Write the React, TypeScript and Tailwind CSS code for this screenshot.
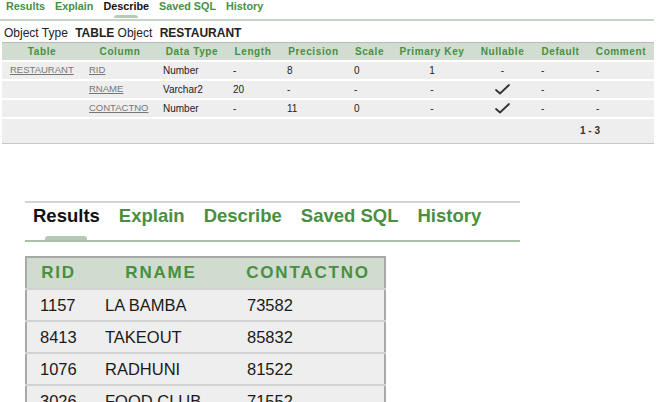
import React from "react"

const green = "text-[#4a8f3f]"

const topTabs = ["Results", "Explain", "Describe", "Saved SQL", "History"]

type DescRow = {
  table: string
  column: string
  type: string
  length: string
  precision: string
  scale: string
  pk: string
  nullable: boolean
}

const descRows: DescRow[] = [
  { table: "RESTAURANT", column: "RID", type: "Number", length: "-", precision: "8", scale: "0", pk: "1", nullable: false },
  { table: "", column: "RNAME", type: "Varchar2", length: "20", precision: "-", scale: "-", pk: "-", nullable: true },
  { table: "", column: "CONTACTNO", type: "Number", length: "-", precision: "11", scale: "0", pk: "-", nullable: true },
]

const results = [
  ["1157", "LA BAMBA", "73582"],
  ["8413", "TAKEOUT", "85832"],
  ["1076", "RADHUNI", "81522"],
  ["3026", "FOOD CLUB", "71552"],
]

const Check = () => (
  <svg width="15" height="11" viewBox="0 0 15 11" className="inline-block">
    <path d="M1 6 L5 9.5 L14 1" fill="none" stroke="#333" strokeWidth={1.8} strokeLinecap="round" strokeLinejoin="round" />
  </svg>
)

const cols = [
  { label: "Table", w: "w-[80px]" },
  { label: "Column", w: "w-[76px]" },
  { label: "Data Type", w: "w-[68px]" },
  { label: "Length", w: "w-[54px]" },
  { label: "Precision", w: "w-[67px]" },
  { label: "Scale", w: "w-[45px]" },
  { label: "Primary Key", w: "w-[80px]" },
  { label: "Nullable", w: "w-[61px]" },
  { label: "Default", w: "w-[55px]" },
  { label: "Comment", w: "w-[66px]" },
]

const DescribePanel = () => (
  <div className="w-[654px]">
    <div className="flex gap-[10px] pl-[6px] h-[19px] text-[10.8px] leading-[12px] font-bold">
      {topTabs.map((t) => (
        <div key={t} className="flex flex-col items-center">
          <span className={t === "Describe" ? "text-[#111]" : green}>{t}</span>
          {t === "Describe" && <div className="mt-[3px] w-[24px] h-[3px] rounded-t-sm bg-[#b9cbb9]" />}
        </div>
      ))}
    </div>
    <div className="h-[2px] bg-[#c6d6c6]" />
    <div className="pl-[4px] pt-[6px] h-[21px] text-[12px] leading-[13px] text-[#222]">
      Object Type <span className="font-bold ml-[4px]">TABLE</span> Object <span className="font-bold ml-[4px]">RESTAURANT</span>
    </div>
    <table className="ml-[2px] w-[652px] border-collapse table-fixed">
      <thead>
        <tr className="bg-[#d0ddd0] border-t border-[#b8b8b8] h-[18px]">
          {cols.map((c) => (
            <th key={c.label} className={`${c.w} ${green} text-[10px] font-bold tracking-[0.6px] text-center p-0`}>
              {c.label}
            </th>
          ))}
        </tr>
      </thead>
      <tbody className="text-[10px] text-[#222]">
        {descRows.map((r, i) => (
          <tr key={i} className="bg-[#efeeef] border-t-2 border-white h-[19px]">
            <td className="pl-[8px] text-[9.5px] text-[#777] underline">{r.table}</td>
            <td className="pl-[7px] text-[9.5px] text-[#777] underline">{r.column}</td>
            <td className="pl-[5px]">{r.type}</td>
            <td className="pl-[7px]">{r.length}</td>
            <td className="pl-[7px]">{r.precision}</td>
            <td className="pl-[7px]">{r.scale}</td>
            <td className="text-center">{r.pk}</td>
            <td className="text-center">{r.nullable ? <Check /> : "-"}</td>
            <td className="pl-[8px]">-</td>
            <td className="pl-[8px]">-</td>
          </tr>
        ))}
        <tr className="bg-[#efeeef] border-t-2 border-white border-b border-b-[#c8c8c8] h-[26px]">
          <td colSpan={10} className="text-right pr-[54px] font-bold text-[#333]">1 - 3</td>
        </tr>
      </tbody>
    </table>
  </div>
)

const bottomTabs = ["Results", "Explain", "Describe", "Saved SQL", "History"]

const ResultsPanel = () => (
  <div className="ml-[25px] mt-[57px] w-[495px]">
    <div className="h-[2px] bg-[#d4d4d4]" />
    <div className="flex gap-[19px] pl-[8px] pt-[2px] h-[37px] text-[18.5px] leading-[22px] font-bold">
      {bottomTabs.map((t) => (
        <div key={t} className="flex flex-col items-center">
          <span className={t === "Results" ? "text-[#111]" : green}>{t}</span>
          {t === "Results" && <div className="mt-[9px] w-[42px] h-[5px] rounded-t-[3px] bg-[#b5c9b5]" />}
        </div>
      ))}
    </div>
    <div className="h-[2px] bg-[#a9c1a9]" />
    <table className="mt-[14px] w-[361px] border-collapse table-fixed border-2 border-[#a9a9a9]">
      <thead>
        <tr className="bg-[#cfdccf] h-[32px]">
          <th className={`w-[64px] ${green} text-[17px] font-bold tracking-[1.8px] text-center`}>RID</th>
          <th className={`w-[142px] ${green} text-[17px] font-bold tracking-[1.8px] text-center`}>RNAME</th>
          <th className={`${green} text-[17px] font-bold tracking-[1.8px] text-center`}>CONTACTNO</th>
        </tr>
      </thead>
      <tbody className="text-[16.5px] text-[#1a1a1a]">
        {results.map((r) => (
          <tr key={r[0]} className="bg-[#efeeef] border-t-2 border-[#d2d2d2] h-[32px]">
            <td className="pl-[13px]">{r[0]}</td>
            <td className="pl-[15px]">{r[1]}</td>
            <td className="pl-[15px]">{r[2]}</td>
          </tr>
        ))}
      </tbody>
    </table>
  </div>
)

export default function App() {
  return (
    <div className="w-[664px] h-[402px] overflow-hidden bg-white font-['Liberation_Sans',Arial,sans-serif]">
      <DescribePanel />
      <ResultsPanel />
    </div>
  )
}
